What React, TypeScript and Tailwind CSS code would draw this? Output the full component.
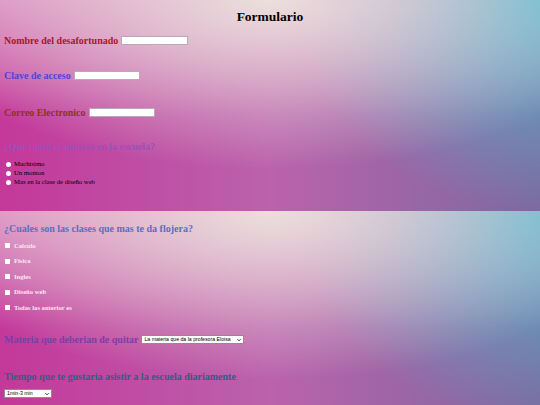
const serif = "font-['Liberation_Serif','Times_New_Roman',serif]";

function TextBox({ width }: { width: string }) {
  return (
    <input
      type="text"
      className={`ml-[3px] h-[9px] ${width} border border-[#b9a8b8] bg-white`}
    />
  );
}

function Picker({ label, width }: { label: string; width: string }) {
  return (
    <span
      className={`relative inline-flex h-[9px] ${width} items-center border border-[#8d8d8d] bg-white pl-[2px] font-['Liberation_Sans',Arial,sans-serif] text-[5.2px] font-normal leading-none text-black`}
    >
      {label}
      <svg
        viewBox="0 0 10 10"
        className="absolute right-[2px] top-[2px] h-[4px] w-[4px]"
      >
        <path d="M1 3 L5 7 L9 3" fill="none" stroke="#222" strokeWidth="2.4" />
      </svg>
    </span>
  );
}

const moods = ["Muchisimo", "Un monton", "Mas en la clase de diseño web"];
const classes = ["Calculo", "Fisica", "Ingles", "Diseño web", "Todas las anterior es"];

export default function App() {
  return (
    <div
      className={`${serif} min-h-[405px] w-full overflow-hidden px-[4px] [background-image:radial-gradient(ellipse_70%_80%_at_50%_0%,rgba(236,230,222,0.93),rgba(236,230,222,0)_100%),radial-gradient(ellipse_45%_100%_at_100%_0%,rgba(92,180,204,1),rgba(92,180,204,0)_100%),linear-gradient(to_bottom,rgba(220,145,196,0.85),rgba(220,145,196,0)_55%),linear-gradient(to_right,#c4389a,#bb62ac_50%,#7c6a9f)] [background-size:100%_211px]`}
    >
      <h1 className="mt-[10px] flex h-[14px] items-center justify-center text-[13.5px] font-bold text-black">
        Formulario
      </h1>

      <div className="mt-[9px] flex h-[14px] items-center text-[10px] font-bold text-[#a5182c]">
        Nombre del desafortunado
        <TextBox width="w-[67px]" />
      </div>

      <div className="mt-[21px] flex h-[14px] items-center text-[10px] font-bold text-[#4f45d6]">
        Clave de acceso
        <TextBox width="w-[66px]" />
      </div>

      <div className="mt-[23px] flex h-[14px] items-center text-[10px] font-bold text-[#8e3326]">
        Correo Electronico
        <TextBox width="w-[66px]" />
      </div>

      <div className="mt-[20px] flex h-[14px] items-center text-[10px] font-bold text-[#9752ba]">
        ¿Que tanto se aburre en la escuela?
      </div>

      <div className="mt-[7px] flex flex-col">
        {moods.map((m) => (
          <label key={m} className="flex h-[9px] items-center text-[6.7px] text-black">
            <span className="ml-[2px] mr-[3px] h-[5px] w-[5px] rounded-full bg-white" />
            {m}
          </label>
        ))}
      </div>

      <div className="mt-[34px] flex h-[14px] items-center text-[10px] font-bold text-[#5a6ec4]">
        ¿Cuales son las clases que mas te da flojera?
      </div>

      <div className="mt-[3px] flex flex-col">
        {classes.map((c) => (
          <label
            key={c}
            className="flex h-[15.5px] items-center text-[6.6px] font-bold text-[#f6e9f2]"
          >
            <span className="ml-[1px] mr-[4px] h-[5px] w-[5px] bg-white" />
            {c}
          </label>
        ))}
      </div>

      <div className="mt-[17px] flex h-[14px] items-center text-[10px] font-bold text-[#7a3ea9]">
        Materia que deberian de quitar
        <span className="ml-[3px] flex">
          <Picker label="La materia que da la profesora Eloisa" width="w-[103px]" />
        </span>
      </div>

      <div className="mt-[23px] flex h-[14px] items-center text-[10px] font-bold text-[#2f5f80]">
        Tiempo que te gustaria asistir a la escuela diariamente
      </div>

      <div className="mt-[5px] flex h-[10px] items-center">
        <Picker label="1min-3 min" width="w-[48px]" />
      </div>
    </div>
  );
}
